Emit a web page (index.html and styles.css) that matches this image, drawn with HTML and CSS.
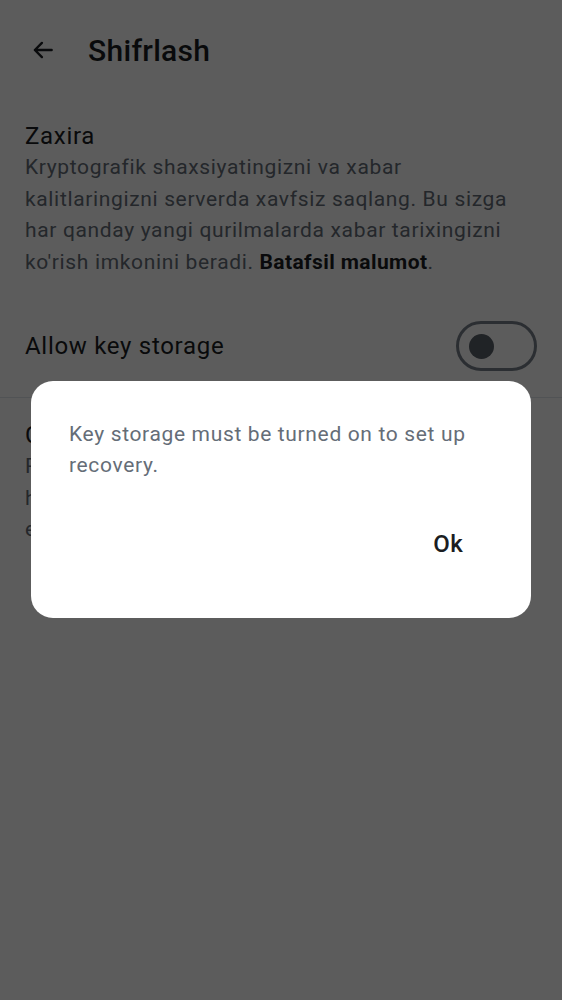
FILE: index.html
```html
<!DOCTYPE html>
<html lang="uz">
<head>
<meta charset="utf-8">
<title>Shifrlash</title>
<link rel="stylesheet" href="styles.css">
</head>
<body>
<div class="page">
  <header class="topbar">
    <button class="back" aria-label="Back">
      <svg width="26" height="26" viewBox="0 0 24 24" fill="none" stroke="#1b1d22" stroke-width="2.2" stroke-linecap="round" stroke-linejoin="round"><path d="M20 12H4.5M11 5.5L4.5 12 11 18.5"/></svg>
    </button>
    <h1 class="title">Shifrlash</h1>
  </header>
  <section class="section">
    <h2 class="heading">Zaxira</h2>
    <p class="desc">Kryptografik shaxsiyatingizni va xabar kalitlaringizni serverda xavfsiz saqlang. Bu sizga har qanday yangi qurilmalarda xabar tarixingizni ko'rish imkonini beradi. <b class="link">Batafsil malumot</b>.</p>
  </section>
  <div class="row">
    <span class="row-label">Allow key storage</span>
    <span class="switch"><span class="thumb"></span></span>
  </div>
  <div class="divider"></div>
  <section class="section second">
    <h2 class="heading">Change recovery key</h2>
    <p class="desc">Recover your cryptographic identity and message history with a recovery key if you’ve lost all your existing devices.</p>
  </section>
</div>
<div class="scrim">
  <div class="dialog">
    <p class="dialog-text">Key storage must be turned on to set up recovery.</p>
    <div class="dialog-actions"><button class="ok">Ok</button></div>
  </div>
</div>
</body>
</html>
```
FILE: styles.css
```css
* { box-sizing: border-box; }
html, body { margin: 0; padding: 0; }
body {
  width: 562px;
  height: 1000px;
  background: #ffffff;
  font-family: Roboto, "Noto Sans", sans-serif;
  color: #1b1d22;
  overflow: hidden;
}
.page { height: 1000px; }
.topbar {
  height: 100px;
  display: flex;
  align-items: center;
  padding-left: 30px;
}
.back {
  border: 0;
  background: none;
  padding: 0;
  width: 26px;
  height: 26px;
  display: flex;
}
.title {
  margin: 0 0 0 32px;
  font-size: 30px;
  font-weight: 500;
  letter-spacing: 0.3px;
  color: #1b1d22;
}
.section { padding: 21px 25px 0; }
.heading {
  margin: 0;
  font-size: 24px;
  font-weight: 400;
  line-height: 31px;
  letter-spacing: 0.7px;
  color: #1b1d22;
}
.desc {
  margin: 0;
  font-size: 21px;
  line-height: 31.5px;
  letter-spacing: 0.65px;
  color: #656d77;
}
.link { font-weight: 700; color: #1b1d22; letter-spacing: 0.4px; }
.row {
  display: flex;
  align-items: center;
  justify-content: space-between;
  padding: 0 25px;
  height: 100px;
  margin-top: 18px;
}
.row-label { font-size: 24px; letter-spacing: 0.7px; }
.switch {
  width: 81px;
  height: 50px;
  border: 3px solid #78808a;
  border-radius: 25px;
  display: flex;
  align-items: center;
  padding-left: 10px;
}
.thumb {
  width: 25px;
  height: 25px;
  border-radius: 50%;
  background: #5a616a;
}
.divider { height: 1px; background: #e1e6ec; margin-top: 1px; }
.second { padding-top: 22px; }
.scrim {
  position: fixed;
  inset: 0;
  background: rgba(0, 0, 0, 0.64);
  display: flex;
  justify-content: center;
  align-items: flex-start;
  padding-top: 381px;
}
.dialog {
  width: 500px;
  height: 237px;
  background: #ffffff;
  border-radius: 22px;
  padding: 38px 38px 0;
}
.dialog-text {
  margin: 0;
  font-size: 21px;
  line-height: 31px;
  letter-spacing: 0.65px;
  color: #656d77;
}
.dialog-actions {
  display: flex;
  justify-content: flex-end;
  margin-top: 49px;
  padding-right: 30px;
}
.ok {
  border: 0;
  background: none;
  padding: 0;
  font-family: Roboto, sans-serif;
  font-size: 24px;
  font-weight: 500;
  letter-spacing: 0.3px;
  color: #1b1d22;
}
```
